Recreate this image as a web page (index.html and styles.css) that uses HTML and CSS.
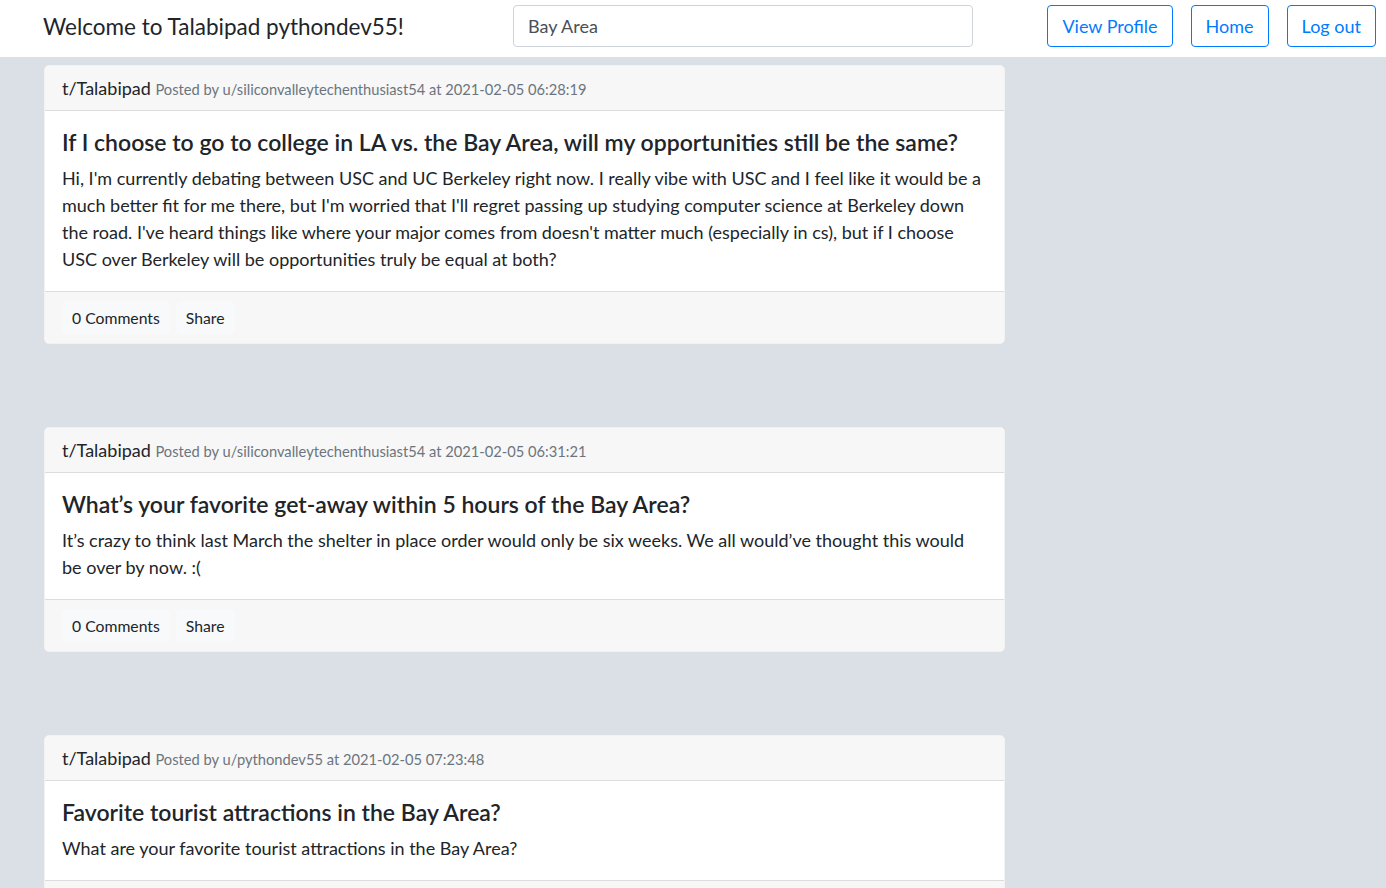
FILE: index.html
```html
<!DOCTYPE html>
<html lang="en">
<head>
<meta charset="utf-8">
<title>Talabipad</title>
<link rel="stylesheet" href="styles.css">
</head>
<body>
<nav class="navbar">
  <div class="brand">Welcome to Talabipad pythondev55!</div>
  <input class="search" type="text" value="Bay Area">
  <div class="nav-buttons">
    <button class="btn-outline">View Profile</button>
    <button class="btn-outline">Home</button>
    <button class="btn-outline">Log out</button>
  </div>
</nav>
<main class="feed">
  <article class="card">
    <header class="card-header"><span class="topic">t/Talabipad</span> <span class="meta">Posted by u/siliconvalleytechenthusiast54 at 2021-02-05 06:28:19</span></header>
    <section class="card-body">
      <h2 class="title">If I choose to go to college in LA vs. the Bay Area, will my opportunities still be the same?</h2>
      <p class="text">Hi, I'm currently debating between USC and UC Berkeley right now. I really vibe with USC and I feel like it would be a much better fit for me there, but I'm worried that I'll regret passing up studying computer science at Berkeley down the road. I've heard things like where your major comes from doesn't matter much (especially in cs), but if I choose USC over Berkeley will be opportunities truly be equal at both?</p>
    </section>
    <footer class="card-footer"><button class="btn-light">0 Comments</button><button class="btn-light">Share</button></footer>
  </article>
  <article class="card">
    <header class="card-header"><span class="topic">t/Talabipad</span> <span class="meta">Posted by u/siliconvalleytechenthusiast54 at 2021-02-05 06:31:21</span></header>
    <section class="card-body">
      <h2 class="title">What’s your favorite get-away within 5 hours of the Bay Area?</h2>
      <p class="text">It’s crazy to think last March the shelter in place order would only be six weeks. We all would’ve thought this would be over by now. :(</p>
    </section>
    <footer class="card-footer"><button class="btn-light">0 Comments</button><button class="btn-light">Share</button></footer>
  </article>
  <article class="card">
    <header class="card-header"><span class="topic">t/Talabipad</span> <span class="meta">Posted by u/pythondev55 at 2021-02-05 07:23:48</span></header>
    <section class="card-body">
      <h2 class="title">Favorite tourist attractions in the Bay Area?</h2>
      <p class="text">What are your favorite tourist attractions in the Bay Area?</p>
    </section>
    <footer class="card-footer"><button class="btn-light">0 Comments</button><button class="btn-light">Share</button></footer>
  </article>
</main>
</body>
</html>
```

FILE: styles.css
```css
* { box-sizing: border-box; }
html, body { margin: 0; padding: 0; }
body {
  background: #dae0e6;
  font-family: Lato, "Noto Sans", sans-serif;
  color: #212529;
  font-size: 18px;
  line-height: 1.5;
}
.navbar {
  height: 57px;
  background: #fff;
  display: flex;
  align-items: flex-start;
  padding: 5px 10px 0 43px;
}
.brand {
  font-size: 22.5px;
  line-height: 43px;
  width: 470px;
  color: #212529;
}
.search {
  width: 460px;
  height: 42px;
  border: 1px solid #ced4da;
  border-radius: 4px;
  padding: 0 14px;
  font: inherit;
  font-size: 18px;
  color: #495057;
}
.nav-buttons {
  margin-left: auto;
  display: flex;
  gap: 18px;
}
.btn-outline {
  height: 42px;
  padding: 0 14px;
  background: #fff;
  border: 1px solid #007bff;
  border-radius: 4px;
  color: #007bff;
  font: inherit;
  font-size: 18px;
}
.feed {
  width: 961px;
  margin-left: 44px;
  padding-top: 8px;
  display: flex;
  flex-direction: column;
  gap: 83px;
}
.card {
  background: #fff;
  border: 1px solid #f2f2f2;
  border-radius: 5px;
  overflow: hidden;
}
.card-header {
  background: #f7f7f7;
  border-bottom: 1px solid #dcdcdc;
  padding: 0 17px;
  height: 45px;
  line-height: 44px;
  white-space: nowrap;
}
.topic { font-size: 18px; }
.meta { font-size: 14.7px; color: #6c757d; }
.card-body {
  padding: 18px 17px;
}
.title {
  margin: 0 0 9px;
  font-size: 23px;
  font-weight: 600;
  line-height: 27px;
}
.text {
  margin: 0;
  font-size: 18px;
  line-height: 27px;
}
.card-footer {
  background: #f7f7f7;
  border-top: 1px solid #dcdcdc;
  height: 52px;
  padding: 9px 17px;
  display: flex;
  gap: 6px;
}
.btn-light {
  background: #f8f9fa;
  border: 1px solid #f8f9fa;
  border-radius: 4px;
  font: inherit;
  font-size: 15.75px;
  color: #212529;
  padding: 0 9px;
  height: 33px;
}
```
